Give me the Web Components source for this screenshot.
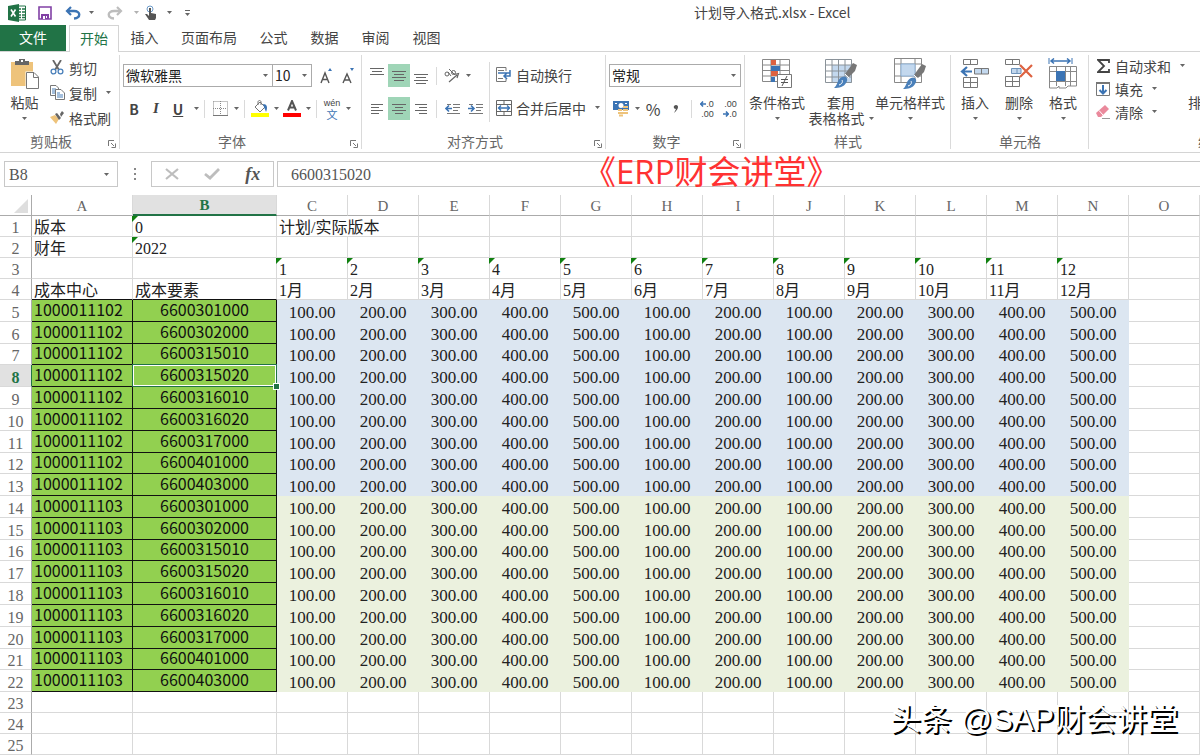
<!DOCTYPE html>
<html lang="zh-CN">
<head>
<meta charset="utf-8">
<title>计划导入格式.xlsx - Excel</title>
<style>
html,body{margin:0;height:100%;overflow:hidden;background:#fff}
body{font-family:"Noto Sans CJK SC",sans-serif;font-size:14px;color:#444}
</style>
</head>
<body>
<excel-app></excel-app>
<script>
const svg=(w,h,body)=>`<svg width="${w}" height="${h}" viewBox="0 0 ${w} ${h}" fill="none" aria-hidden="true">${body}</svg>`;
const lines=(list,w,h)=>svg(w,h,`<path stroke="#666" d="${list.map(([x,y,l])=>`M${x} ${y}h${l}`).join('')}"/>`);
const brush='<path d="M28 4 32 6 30 12 24 18 20 15Z" fill="#777"/><path d="M20 15 24 19" stroke="#fff" stroke-width="1"/><path d="M17 18C21 16 24 20 21 24 19 28 14 29 9 29 13 26 12 20 17 18Z" fill="#4a80ba"/><path d="M14 26C17 25 18 23 17 21" stroke="#fff"/>';
const ICONS={
caret:svg(5,3,'<path d="M0 0H5L2.500 3Z" fill="#666"/>'),
excel:svg(18,18,'<path d="M10 2H17.500V16H10" fill="#fff" stroke="#217346"/><path d="M11 5h2M14 5h3M11 8h2M14 8h3M11 11h2M14 11h3M11 13.500h2M14 13.500h3" stroke="#217346" stroke-width="1.500"/><path d="M0 2 11 0V18L0 16Z" fill="#217346"/><path d="M3 5.500 7.500 12.500M7.500 5.500 3 12.500" stroke="#fff" stroke-width="1.600"/>'),
save:svg(14,14,'<path d="M1 1H13V13H1Z" fill="#fff" stroke="#8140a5" stroke-width="1.600"/><path d="M3 8H11V13H3Z" fill="#8140a5"/><path d="M5 10H7V13H5ZM8 10H9V12H8Z" fill="#fff"/>'),
undo:svg(16,14,'<path d="M2 5H9C16 5 16 12 9 12.500" stroke="#3c74b4" stroke-width="2.400"/><path d="M6 1 2 5 6 9" stroke="#3c74b4" stroke-width="2.200"/>'),
redo:svg(16,14,'<path d="M14 5H7C0 5 0 12 7 12.500" stroke="#bdbdbd" stroke-width="2.400"/><path d="M10 1 14 5 10 9" stroke="#bdbdbd" stroke-width="2.200"/>'),
touch:svg(12,15,'<circle cx="5" cy="4" r="3" stroke="#6d9bc9"/><path d="M4 3h2v5l5 1v4l-1 2H4L0 9h2l2 2Z" fill="#555"/>'),
custom:svg(5,6,'<path d="M0 .5H5" stroke="#666"/><path d="M0 3H5L2.500 6Z" fill="#666"/>'),
paste:svg(28,32,'<path d="M0 4H22V28H0Z" fill="#eec37b"/><path d="M4 3H8V1H14V3H18V7H4Z" fill="#666"/><path d="M10 3h2" stroke="#fff" stroke-width="2"/><path d="M14.500 13.500H28V31H14.500Z" fill="#fff"/><path d="M15.500 14.500H23L27.500 19V30.500H15.500Z" fill="#fff" stroke="#777"/><path d="M22.500 15V19.500H27" stroke="#777"/>'),
cut:svg(14,15,'<path d="M3 0 9 10M11 0 5 10" stroke="#666" stroke-width="1.800"/><circle cx="3.500" cy="11.500" r="2.400" stroke="#4a80ba" stroke-width="1.300"/><circle cx="10.500" cy="11.500" r="2.400" stroke="#4a80ba" stroke-width="1.300"/>'),
copy:svg(15,15,'<path d="M.5 .5H6L8.500 3V10.500H.5Z" fill="#fff" stroke="#777"/><path d="M2 4h4M2 6h3M2 8h3" stroke="#4a80ba"/><path d="M5.500 4.500H11L14.500 8V14.500H5.500Z" fill="#fff" stroke="#777"/><path d="M7 8h3M7 10h6M7 12h6" stroke="#4a80ba"/>'),
painter:svg(14,14,'<path d="M0 6 5 4 9 8 6 13Z" fill="#eec37b"/><path d="M5 3 7 2 11 7 9 9ZM10 3 12 0 14 2 11 6Z" fill="#666"/>'),
launcher:svg(8,8,'<path d="M.5 6V.5H6" stroke="#777"/><path d="M3 3 6 6M7.500 3.500V7.500H3.500" stroke="#777"/>'),
grow:svg(14,16,'<path d="M1 15 5 5 9 15M2.500 11.500H7.500" stroke="#555" stroke-width="1.400"/><path d="M8 3 10 0 12 3Z" fill="#3c74b4"/>'),
shrink:svg(14,16,'<path d="M1 15 5 6 9 15M2.500 12H7.500" stroke="#555" stroke-width="1.400"/><path d="M8 0 10 3 12 0Z" fill="#3c74b4"/>'),
borders:svg(15,15,'<path d="M.5 .5H14.500V14M.5 .5V14M7.500 0V14M0 7.500H14" stroke="#888" stroke-dasharray="1 1"/><path d="M0 14.500H15" stroke="#777"/>'),
fill:svg(18,17,'<path d="M4 7 9 2 14 7 9 12Z" fill="#fff" stroke="#777"/><path d="M7 5V2C7 0 10 0 10 2V5" stroke="#777"/><path d="M12 4C16 4 17 7 15 12L13 7Z" fill="#3c74b4"/><path d="M0 13H18V17H0Z" fill="#ff0"/>'),
fontcolor:svg(18,17,'<path d="M5 10.500 9 1 13 10.500M6.500 7.500H11.500" stroke="#555" stroke-width="2"/><path d="M0 13H18V17H0Z" fill="#f00"/>'),
orient:svg(16,15,'<circle cx="3" cy="6" r="2" stroke="#666"/><path d="M4 4 7 8M5 1 10 6" stroke="#666"/><circle cx="9.500" cy="4.500" r="2" stroke="#666"/><path d="M5 14 13 7M10 6.500 14.500 5.500 13 10" stroke="#666" stroke-width="1.200"/>'),
top:lines([[0,.5,14],[2,3.5,10],[0,6.5,14]],14,15),
mid:lines([[0,3.5,14],[2,6.5,10],[0,9.5,14],[2,12.5,10]],14,16),
bottom:lines([[0,6.5,14],[2,9.5,10],[0,12.5,14],[2,15.5,10]],14,16),
left:lines([[0,.5,12],[0,3.5,8],[0,6.5,12],[0,9.5,8]],12,10),
center:lines([[0,.5,14],[3,3.5,8],[0,6.5,14],[3,9.5,8]],14,10),
right:lines([[0,.5,12],[4,3.5,8],[0,6.5,12],[4,9.5,8]],12,10),
outdent:svg(15,10,'<path d="M2 .5H6M8 .5H15M8 3.500H15M8 6.500H13M2 9.500H15" stroke="#777"/><path d="M1 4.500H7M4 1.500 1 4.500 4 7.500" stroke="#3c74b4" stroke-width="1.600"/>'),
indent:svg(15,10,'<path d="M1 .5H5M8 .5H15M8 3.500H15M8 6.500H13M1 9.500H15" stroke="#777"/><path d="M0 4.500H6M3 1.500 6 4.500 3 7.500" stroke="#3c74b4" stroke-width="1.600"/>'),
wrap:svg(16,16,'<path d="M10 .5H.5V14.500H10V12M10 .5V4" stroke="#777"/><path d="M2 3.500H8M2 11.500H7" stroke="#777"/><path d="M2 6H14V3M14 4V9H9M11 6 8 9 11 12" stroke="#3c74b4" stroke-width="1.500"/>'),
merge:svg(16,16,'<path d="M.5 .5H15.500V15.500H.5ZM.5 4.500H15.500M.5 11.500H15.500M8 0V4M8 12V16" stroke="#666"/><path d="M2 8H14M5 5.500 2.500 8 5 10.500M11 5.500 13.500 8 11 10.500" stroke="#3c74b4" stroke-width="1.300"/>'),
money:svg(16,16,'<path d="M0 0H16V9H0Z" fill="#3c74b4"/><path d="M2 2H4V3H2ZM12 2h2v1h-2Z" fill="#fff"/><circle cx="8" cy="4.500" r="2.500" fill="#fff"/><path d="M5 9h4M5 12h5M6 14.500h4M10 6h5M10 9h5M10 12h5" stroke="#eec37b" stroke-width="2"/>'),
comma:svg(6,10,'<path d="M3 1C6 1 6 5 1 9L3 5C0 5 0 1 3 1Z" fill="#555"/>'),
arrowL:svg(6,6,'<path d="M0 3H6M3 .5 .8 3 3 5.500" stroke="#3c74b4" stroke-width="1.600"/>'),
arrowR:svg(6,6,'<path d="M0 3H6M3 .5 5.200 3 3 5.500" stroke="#3c74b4" stroke-width="1.600"/>'),
cond:svg(30,30,'<path d="M.5 .5H27.500V22.500H.5ZM.5 6H27M.5 11.500H27M.5 17H27M9 0V22M18 0V22" fill="#fff" stroke="#888"/><path d="M9 1H14V6H9ZM9 12H16V17H9Z" fill="#dd6240"/><path d="M9 7H18V12H9ZM9 18H13V23H9Z" fill="#3c74b4"/><path d="M15.500 15.500H29.500V28.500H15.500Z" fill="#fff" stroke="#777"/><path d="M19 20.500H26M19 23.500H26M25 17 20 27" stroke="#555"/>'),
table:svg(32,30,'<path d="M.5 .5H26.500V23.500H.5Z" fill="#fff"/><path d="M7 6H27V24H7Z" fill="#c3d8ee"/><path d="M.5 .5H26.500V23.500H.5ZM.5 6H27M.5 12H27M.5 18H27M7 0V24M13.500 0V24M20 0V24" stroke="#8a9299"/>'+brush),
style:svg(32,32,'<path d="M.5 .5H27.500V24.500H.5ZM.5 6H27M.5 18H27M7 0V24M21 0V24" fill="#fff" stroke="#888"/><path d="M7 6H21V18H7Z" fill="#c3d8ee" stroke="#8fb2d6"/><g transform="translate(0 2)">'+brush+'</g>'),
insert:svg(30,30,'<path d="M3.500 .5H17.500V5.500H3.500ZM10.500 0V5M3.500 18.500H17.500V28.500H3.500ZM3.500 23.500H17M10.500 18V28" stroke="#777"/><path d="M14.500 9.500H28.500V15H14.500ZM21.500 9V15" fill="#c3d8ee" stroke="#777"/><path d="M2 12.500H12M7 8 2 12.500 7 17" stroke="#3c74b4" stroke-width="2.200"/>'),
del:svg(30,30,'<path d="M1.500 .5H15.500V5.500H1.500ZM8.500 0V5M1.500 17.500H15.500V27.500H1.500ZM1.500 22.500H15M8.500 17V27" stroke="#777"/><path d="M7.500 9.500H17V14.500H7.500ZM13 9V15" fill="#c3d8ee" stroke="#6e93ba"/><path d="M16 6 28 18M28 6 16 18" stroke="#dd6240" stroke-width="2.200"/>'),
format:svg(30,32,'<path d="M1 0V6M24 0V6" stroke="#3c74b4"/><path d="M3 3H22M6 .5 3 3 6 5.500M19 .5 22 3 19 5.500" stroke="#3c74b4" stroke-width="1.500"/><path d="M1.500 8.500H28.500V28H20L18 30H11V28L9 30H1.500ZM1.500 13.500H28M1.500 23.500H28M8.500 8V28M17.500 8V28M22.500 8V28" stroke="#888"/><path d="M8 13H17V23H8Z" fill="#3c74b4"/>'),
sum:svg(13,14,'<path d="M12 4V1H1L7 7 1 13H12V10" stroke="#444" stroke-width="1.800"/>'),
filldown:svg(14,14,'<path d="M.5 .5H13.500V13.500H.5Z" fill="#fff" stroke="#777"/><path d="M0 1H14" stroke="#777" stroke-width="2"/><path d="M7 3V11M3.500 8 7 11.500 10.500 8" stroke="#3c74b4" stroke-width="2"/>'),
eraser:svg(14,14,'<path d="M0 8 9 0 13 4 5 12 2 12Z" fill="#ea899c"/><path d="M3 5.500 7 10" stroke="#fff"/><path d="M6 13.500H14" stroke="#999"/>'),
cancel:svg(14,12,'<path d="M1 1 13 11M13 1 1 11" stroke="#bdbdbd" stroke-width="2.200"/>'),
ok:svg(16,12,'<path d="M1 6 6 10 15 1" stroke="#bdbdbd" stroke-width="2.800"/>')
};
const RESET=`*,:host{box-sizing:border-box}button{font:inherit;color:inherit;background:none;border:0;padding:0;margin:0;display:flex;align-items:center;justify-content:center;white-space:nowrap}svg{display:block;flex:none}`;
const CARET_BG=`url("data:image/svg+xml,%3Csvg xmlns='http://www.w3.org/2000/svg' width='5' height='3'%3E%3Cpath d='M0 0H5L2.500 3Z' fill='%23666'/%3E%3C/svg%3E")`;
function define(name,html,after){
  const t=document.createElement('template');
  t.innerHTML=html;
  customElements.define(name,class extends HTMLElement{
    constructor(){super();this.attachShadow({mode:'open'}).append(t.content.cloneNode(true));}
    connectedCallback(){if(after)after(this,this.shadowRoot);}
  });
}

define('title-bar',`<style>${RESET}
:host{display:grid;grid-template-columns:694fr 506fr;height:25px;align-items:center}
.quick{display:flex;align-items:center;height:24px;padding-left:6px}
.i{width:22px}.s{width:34px}.c{width:14px}h1{margin:0;padding-bottom:2px;font-size:14px;font-weight:400;line-height:22px}
</style><div class="quick">
<button class="i" aria-label="Excel">${ICONS.excel}</button><button class="s" aria-label="保存">${ICONS.save}</button>
<button class="i" aria-label="撤消">${ICONS.undo}</button><button class="c" aria-label="撤消列表">${ICONS.caret}</button>
<button class="s" aria-label="恢复">${ICONS.redo}</button><button class="c" style="width:8px;opacity:.5" aria-label="恢复列表">${ICONS.caret}</button>
<button class="i" aria-label="触摸模式">${ICONS.touch}</button><button class="c" aria-label="模式列表">${ICONS.caret}</button>
<button class="i" aria-label="自定义">${ICONS.custom}</button></div><h1>计划导入格式.xlsx - Excel</h1>`);

define('tab-strip',`<style>${RESET}
:host{display:flex;height:27px;border-bottom:1px solid #d4d4d4}
button{width:66px;height:26px;padding-bottom:2px}
.file{background:#217346;color:#fff}
.short{width:51px}.long{width:78px}
.on{width:50px;height:27px;margin:0 0 0 3px;color:#217346;background:#fff;border:1px solid #d4d4d4;border-bottom:0}
</style><button class="file">文件</button><button class="on">开始</button><button class="short">插入</button><button class="long">页面布局</button><button class="short">公式</button><button class="short">数据</button><button class="short">审阅</button><button class="short">视图</button>`);

define('ribbon-group',`<style>${RESET}
:host{display:flex;flex-direction:column;flex:none;position:relative;height:100px}
:host::after{content:"";position:absolute;right:0;top:3px;bottom:3px;width:1px;background:#dadada}
.body{flex:1;min-height:0}
footer{display:flex;justify-content:center;height:20px;padding-right:18px;line-height:18px;color:#666;white-space:nowrap}
:host([plain]) footer{padding-right:0}
.launch{position:absolute;right:4px;bottom:4px}
:host([plain]) .launch{display:none}
</style><div class="body"><slot></slot></div><footer></footer><button class="launch" aria-label="更多选项">${ICONS.launcher}</button>`,
(el,r)=>{r.querySelector('footer').textContent=el.getAttribute('label');});

define('big-button',`<style>${RESET}
:host{display:block;flex:none}
button{width:100%;flex-direction:column;justify-content:flex-start;padding-top:6px;line-height:16px}
.pic{height:32px;margin-bottom:4px;display:flex;align-items:center}
.row{display:flex;align-items:center;justify-content:center;gap:4px;height:16px}
</style><button><span class="pic"></span><span><slot></slot></span><span class="row"><slot name="more"></slot>${ICONS.caret}</span></button>`,
(el,r)=>{r.querySelector('.pic').innerHTML=ICONS[el.getAttribute('icon')];});

define('line-button',`<style>${RESET}
:host{display:block}button{gap:4px;height:100%;padding-bottom:2px}
.pic{width:16px;display:flex;justify-content:center}.menu{width:14px;display:flex;justify-content:center}
:host([nomenu]) .menu{display:none}
</style><button><span class="pic"></span><slot></slot><span class="menu">${ICONS.caret}</span></button>`,
(el,r)=>{r.querySelector('.pic').innerHTML=ICONS[el.getAttribute('icon')];});

define('tool-button',`<style>${RESET}
:host{display:block;width:22px;height:23px}
:host([wide]){width:24px}:host([menu]){width:8px}
:host([on]){background:#9fd5b7}
button{width:100%;height:100%}
</style><button><slot></slot></button>`,
(el,r)=>{const b=r.querySelector('button');b.setAttribute('aria-label',el.getAttribute('name'));if(el.hasAttribute('icon'))b.innerHTML=ICONS[el.getAttribute('icon')];});

const tool=(icon,name,extra='')=>`<tool-button icon="${icon}" name="${name}" ${extra}></tool-button>`;
const menu=tool('caret','展开','menu');
define('ribbon-bar',`<style>${RESET}
:host{display:flex;height:101px;border-bottom:1px solid #d4d4d4;overflow:hidden}
.flex{display:flex}.tools{display:flex;flex-direction:column;gap:10px;padding:12px 0 0 3px}
.row{display:flex;height:23px;align-items:center}
.clip{width:120px}.font{width:242px}.align{width:244px}.num{width:139px}.styles{width:206px}.cells{width:138px}.edit{width:246px}
.stack{padding-top:4px}.stack line-button{height:25px}
.edit .stack{width:96px;padding:3px 0 0 6px}.edit .stack line-button{height:23px}
.paste{width:49px}.w1{width:60px}.w2{width:68px}.w3{width:70px}.w4{width:44px}.w5{width:76px}
.pad{padding-left:2px}
select{appearance:none;height:23px;border:1px solid #ababab;border-radius:0;background:#fff ${CARET_BG} no-repeat right 4px center;font:inherit;color:#222;padding:0 2px 2px;margin:0}
.family{width:150px}.size{width:40px;margin-left:-1px}.kind{width:132px}
i.sep{width:8px;height:18px;background:linear-gradient(#dadada,#dadada) no-repeat center/1px 100%}
i.tall{width:1px;height:60px;margin:10px 4px 0 3px;background:#dadada}
.b{font-weight:700;font-size:14px}.it{font:italic 700 15px "Liberation Serif",serif}.u{text-decoration:underline}
.wen{display:flex;flex-direction:column;align-items:center;font:9px/10px "Liberation Sans",sans-serif}.wen b{font:11px/12px "Noto Sans CJK SC",sans-serif;color:#3c74b4}
.dec{display:grid;font:9px/10px "Liberation Sans",sans-serif}.dec>*{display:flex;align-items:center;justify-content:flex-end}
.pct{font-size:16px}
.wraps{padding:12px 0 0 2px;display:flex;flex-direction:column;gap:10px}.wraps line-button{height:23px}
</style>
<ribbon-group class="clip" label="剪贴板"><div class="flex">
<big-button class="paste" icon="paste">粘贴</big-button>
<div class="stack"><line-button icon="cut" nomenu>剪切</line-button><line-button icon="copy">复制</line-button><line-button icon="painter" nomenu>格式刷</line-button></div></div></ribbon-group>
<ribbon-group class="font" label="字体"><div class="tools">
<div class="row"><select class="family" aria-label="字体"><option>微软雅黑</option></select><select class="size" aria-label="字号"><option>10</option></select><i style="width:4px"></i>${tool('grow','增大字号')}${tool('shrink','减小字号')}</div>
<div class="row"><tool-button name="加粗" class="b">B</tool-button><tool-button name="倾斜" class="it">I</tool-button><tool-button name="下划线" class="b"><span class="u">U</span></tool-button><i style="width:3px"></i>${menu}<i class="sep"></i>${tool('borders','边框','wide')}${menu}<i class="sep"></i>${tool('fill','填充颜色','wide')}${menu}${tool('fontcolor','字体颜色','wide')}${menu}<i class="sep"></i><tool-button name="拼音" wide><span class="wen">wén<b>文</b></span></tool-button>${menu}</div></div></ribbon-group>
<ribbon-group class="align" label="对齐方式"><div class="flex"><div class="tools" style="padding-left:4px">
<div class="row">${tool('top','顶端对齐')}${tool('mid','垂直居中','on')}${tool('bottom','底端对齐')}<i class="sep"></i>${tool('orient','方向','wide')}${menu}</div>
<div class="row">${tool('left','左对齐')}${tool('center','居中','on')}${tool('right','右对齐')}<i class="sep"></i>${tool('outdent','减少缩进','wide')}${tool('indent','增加缩进')}</div></div>
<i class="tall"></i><div class="wraps"><line-button icon="wrap" nomenu>自动换行</line-button><line-button icon="merge">合并后居中</line-button></div></div></ribbon-group>
<ribbon-group class="num" label="数字"><div class="tools">
<div class="row"><select class="kind" aria-label="数字格式"><option>常规</option></select></div>
<div class="row">${tool('money','会计格式','wide')}${menu}<tool-button class="pct" name="百分比" wide>%</tool-button>${tool('comma','千位分隔')}<i class="sep"></i><tool-button name="增加小数位" wide><span class="dec"><span>${ICONS.arrowL}.0</span><span>.00</span></span></tool-button><tool-button name="减少小数位"><span class="dec"><span>.00</span><span>${ICONS.arrowR}.0</span></span></tool-button></div></div></ribbon-group>
<ribbon-group class="styles" label="样式" plain><div class="flex pad"><big-button class="w1" icon="cond">条件格式</big-button><big-button class="w2" icon="table">套用<span slot="more">表格格式</span></big-button><big-button class="w3" icon="style">单元格样式</big-button></div></ribbon-group>
<ribbon-group class="cells" label="单元格" plain><div class="flex pad"><big-button class="w4" icon="insert">插入</big-button><big-button class="w4" icon="del">删除</big-button><big-button class="w4" icon="format">格式</big-button></div></ribbon-group>
<ribbon-group class="edit" label="编辑" plain><div class="flex"><div class="stack"><line-button icon="sum">自动求和</line-button><line-button icon="filldown">填充</line-button><line-button icon="eraser">清除</line-button></div><big-button class="w5" icon="caret">排序和筛选</big-button></div></ribbon-group>`);

define('formula-bar',`<style>${RESET}
:host{display:flex;height:26px;margin:8px 0;padding-left:4px;font-family:"Liberation Serif","Noto Sans CJK SC",serif;font-size:16px;color:#555}
select,input{appearance:none;font:inherit;color:inherit;border:1px solid #c8c8c8;border-radius:0;background-color:#fff;margin:0;outline:0}
select{width:114px;padding:0 4px;background:#fff ${CARET_BG} no-repeat right 8px center}
.dots{width:33px;display:flex;align-items:center;justify-content:center}
.acts{display:flex;width:123px;border:1px solid #c8c8c8;margin-right:3px}
.acts button{flex:1}.fx{font:italic 700 18px "Liberation Serif",serif}
input{flex:1;min-width:0;border-right:0;padding:2px 13px 0}
</style><select aria-label="名称框"><option>B8</option></select><span class="dots">${svg(2,12,'<path d="M1 0V12" stroke="#888" stroke-dasharray="2 3" stroke-width="2"/>')}</span>
<div class="acts"><button aria-label="取消">${ICONS.cancel}</button><button aria-label="输入">${ICONS.ok}</button><button class="fx">fx</button></div><input aria-label="编辑栏" value="6600315020">`);

define('sheet-grid',`<style>${RESET}
:host{display:block;font-family:"Liberation Serif","Noto Sans CJK SC",serif;font-size:16px;color:#222}
table{border-collapse:separate;border-spacing:0;table-layout:fixed;width:100%;min-width:1200px}
th,td{padding:3px 2px 0;border:0 solid #d9d9d9;border-width:0 1px 1px 0;height:21px;line-height:17px;white-space:nowrap;position:relative;text-align:left;font-weight:400;overflow:visible}
th{color:#666;text-align:center}
thead th{border-bottom-color:#ababab;font-size:15px}
th:first-child{border-right-color:#ababab}
.hi{background:#e1e1e1;color:#217346;font-weight:700}
thead .hi{border-bottom:2px solid #217346;padding-top:2px}
tbody .hi:first-child{border-right-color:#217346}
tr.data>*{height:22px}
tr.short>*{height:21px}
.key{font-family:"Noto Sans CJK SC",sans-serif;background:#92d050;border-color:#111;color:#111;padding:0 2px 3px}
.head td:nth-child(-n+3){border-bottom-color:#111}
.mid{text-align:center}
.amt{text-align:center;font-size:17px;border-color:transparent}
.blue{background:#dce6f1}.lime{background:#ebf1de}
.flag::before{content:"";position:absolute;left:-1px;top:0;border:3px solid transparent;border-left-color:#108010;border-top-color:#108010}
.sel::before{content:"";position:absolute;inset:-1px;border:1px solid #217346;box-shadow:inset 0 0 0 1px #fff}
.sel::after{content:"";position:absolute;right:-3px;bottom:-3px;width:5px;height:5px;background:#217346;outline:1px solid #fff;z-index:1}
.corner::after{content:"";position:absolute;right:3px;bottom:2px;border:7px solid transparent;border-right-color:#dedede;border-bottom-color:#dedede}
</style><table><colgroup></colgroup><thead></thead><tbody></tbody></table>`,
(el,r)=>{
  const months=[...Array(12).keys()].map(i=>i+1);
  r.querySelector('colgroup').innerHTML=[32,101,144,...Array(13).fill(71)].map(w=>`<col style="width:${w}px">`).join('')+'<col>';
  r.querySelector('thead').innerHTML='<tr><th class="corner"></th>'+[...'ABCDEFGHIJKLMNO'].map(c=>`<th class="${c==='B'?'hi':''}">${c}</th>`).join('')+'<th></th></tr>';
  const blank=n=>'<td></td>'.repeat(n);
  const rows=[
   `<tr><th>1</th><td>版本</td><td class="flag">0</td><td colspan="2">计划/实际版本</td>${blank(12)}</tr>`,
   `<tr><th>2</th><td>财年</td><td class="flag">2022</td>${blank(14)}</tr>`,
   `<tr><th>3</th>${blank(2)}${months.map(m=>`<td class="flag">${m}</td>`).join('')}${blank(2)}</tr>`,
   `<tr class="head"><th>4</th><td>成本中心</td><td>成本要素</td>${months.map(m=>`<td>${m}月</td>`).join('')}${blank(2)}</tr>`];
  const costs=['6600301000','6600302000','6600315010','6600315020','6600316010','6600316020','6600317000','6600401000','6600403000'];
  const amounts=[100,200,300,400,500,100,200,100,200,300,400,500];
  ['1000011102','1000011103'].forEach((center,g)=>costs.forEach((cost,i)=>{
    const n=5+g*9+i,on=n===8;
    rows.push(`<tr class="data ${i===2||i===7?'short':''}"><th class="${on?'hi':''}">${n}</th><td class="key">${center}</td><td class="key mid ${on?'sel':''}">${cost}</td>${amounts.map(a=>`<td class="amt ${g?'lime':'blue'}">${a}.00</td>`).join('')}${blank(2)}</tr>`);
  }));
  for(let n=23;n<26;n++)rows.push(`<tr><th>${n}</th>${blank(16)}</tr>`);
  r.querySelector('tbody').innerHTML=rows.join('');
});

define('stamp-text',`<style>:host{display:block;position:absolute;white-space:nowrap;pointer-events:none}
:host([kind=red]){left:583px;top:148px;font-family:"Open Sans","Noto Sans CJK SC",sans-serif;font-size:33px;line-height:48px;color:#ff3232}
:host([kind=mark]){right:22px;bottom:14px;font-family:"Liberation Sans","Noto Sans CJK SC",sans-serif;font-size:31px;line-height:44px;color:#fff;text-shadow:2px 2px 0 #000}
</style><slot></slot>`);

define('excel-app',`<style>:host{display:block;position:relative;min-height:100vh;background:#fff}</style>
<title-bar></title-bar><tab-strip></tab-strip><ribbon-bar></ribbon-bar><formula-bar></formula-bar><sheet-grid></sheet-grid>
<stamp-text kind="red">《ERP财会讲堂》</stamp-text><stamp-text kind="mark">头条 @SAP财会讲堂</stamp-text>`);
</script>
</body>
</html>
